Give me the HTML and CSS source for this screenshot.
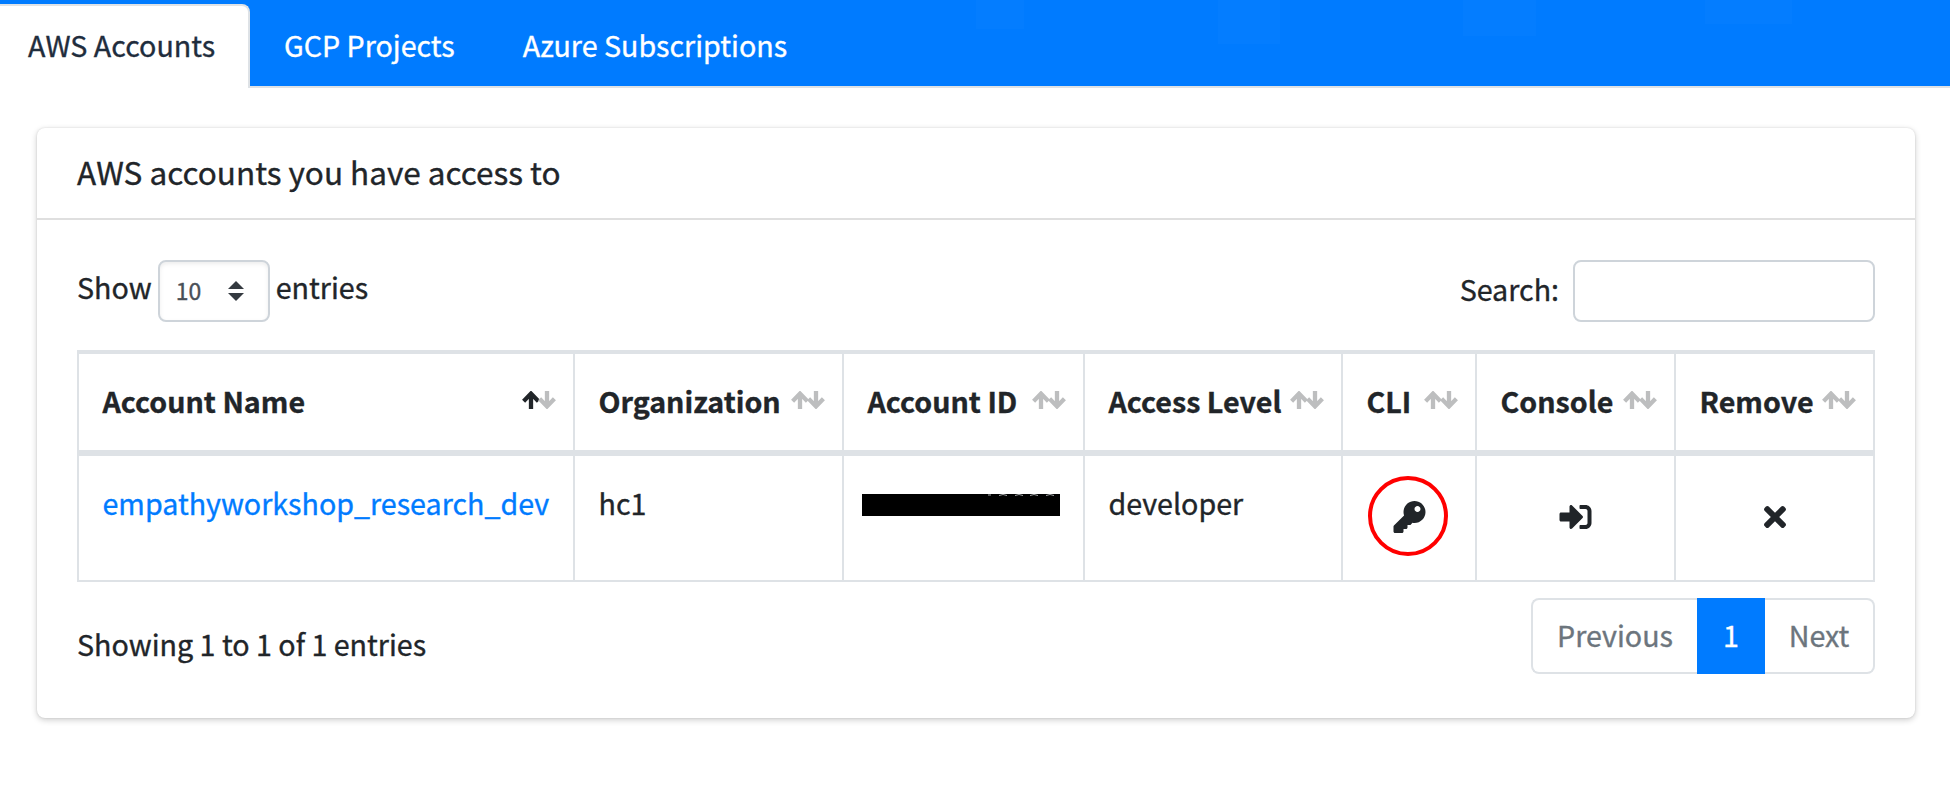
FILE: index.html
```html
<!DOCTYPE html>
<html lang="en">
<head>
<meta charset="utf-8">
<title>AWS Accounts</title>
<link rel="stylesheet" href="styles.css">
</head>
<body>
<svg class="defs" width="0" height="0" aria-hidden="true">
  <symbol id="sort-up" viewBox="0 0 18 18"><path d="M9 18V3M1.600 10.200L9 2.600l7.400 7.600" fill="none" stroke="currentColor" stroke-width="4.300"/></symbol>
  <symbol id="sort-down" viewBox="0 0 18 18"><path d="M9 0v15M1.600 7.800L9 15.400l7.400-7.600" fill="none" stroke="currentColor" stroke-width="4.300"/></symbol>
</svg>
<nav class="tabs">
  <a class="tab tab-active">AWS Accounts</a>
  <a class="tab">GCP Projects</a>
  <a class="tab">Azure Subscriptions</a>
</nav>
<main class="card">
  <header class="card-header"><h3 class="card-title">AWS accounts you have access to</h3></header>
  <div class="card-body">
    <div class="controls">
      <label class="length">Show
        <span class="select">10
          <svg class="caret" viewBox="0 0 16 20"><path d="M8 0l8 8H0zM0 12h16l-8 8z" fill="#343a40"/></svg>
        </span>
        entries</label>
      <label class="search">Search:<input class="search-input" type="text"></label>
    </div>
    <div class="table">
      <div class="row head">
        <div class="cell th">Account Name<span class="sort"><svg class="arrow on"><use href="#sort-up"/></svg><svg class="arrow"><use href="#sort-down"/></svg></span></div>
        <div class="cell th">Organization<span class="sort"><svg class="arrow"><use href="#sort-up"/></svg><svg class="arrow"><use href="#sort-down"/></svg></span></div>
        <div class="cell th">Account ID<span class="sort"><svg class="arrow"><use href="#sort-up"/></svg><svg class="arrow"><use href="#sort-down"/></svg></span></div>
        <div class="cell th">Access Level<span class="sort"><svg class="arrow"><use href="#sort-up"/></svg><svg class="arrow"><use href="#sort-down"/></svg></span></div>
        <div class="cell th">CLI<span class="sort"><svg class="arrow"><use href="#sort-up"/></svg><svg class="arrow"><use href="#sort-down"/></svg></span></div>
        <div class="cell th">Console<span class="sort"><svg class="arrow"><use href="#sort-up"/></svg><svg class="arrow"><use href="#sort-down"/></svg></span></div>
        <div class="cell th">Remove<span class="sort"><svg class="arrow"><use href="#sort-up"/></svg><svg class="arrow"><use href="#sort-down"/></svg></span></div>
      </div>
      <div class="row">
        <div class="cell"><a class="link">empathyworkshop_research_dev</a></div>
        <div class="cell">hc1</div>
        <div class="cell redacted-cell"><svg class="redacted" viewBox="0 0 198 22"><path d="M0 0h198v22H0z"/><path d="M126 1h3M137 1.500q4-2 8 0M153 1.500q4-2 8 0M168 1.500q4-2 8 0M184 1.500q4-2 8 0" fill="none" stroke="#a5a8aa"/></svg></div>
        <div class="cell">developer</div>
        <div class="cell action"><span class="ring"></span><svg class="icon" viewBox="0 0 512 512"><path fill="currentColor" d="M512 176.001C512 273.203 433.202 352 336 352c-11.220 0-22.190-1.062-32.827-3.069l-24.012 27.014A23.999 23.999 0 0 1 261.223 384H224v40c0 13.255-10.745 24-24 24h-40v40c0 13.255-10.745 24-24 24H24c-13.255 0-24-10.745-24-24v-78.059c0-6.365 2.529-12.470 7.029-16.971l161.802-161.802C163.108 213.814 160 195.271 160 176 160 78.798 238.797.001 335.999 0 433.488-.001 512 78.511 512 176.001zM336 128c0 26.510 21.490 48 48 48s48-21.490 48-48-21.490-48-48-48-48 21.490-48 48z"/></svg></div>
        <div class="cell action"><svg class="icon" viewBox="0 0 512 512"><path fill="currentColor" d="M416 448h-84c-6.600 0-12-5.400-12-12v-40c0-6.600 5.400-12 12-12h84c17.700 0 32-14.300 32-32V160c0-17.700-14.300-32-32-32h-84c-6.600 0-12-5.400-12-12V76c0-6.600 5.400-12 12-12h84c53 0 96 43 96 96v192c0 53-43 96-96 96zm-47-209L201 71c-15-15-41-4.500-41 17v96H24c-13.300 0-24 10.700-24 24v96c0 13.300 10.700 24 24 24h136v96c0 21.500 26 32 41 17l168-168c9.300-9.400 9.300-24.600 0-34z"/></svg></div>
        <div class="cell action"><svg class="icon icon-x" viewBox="0 0 352 512"><path fill="currentColor" d="M242.720 256l100.070-100.070c12.280-12.280 12.280-32.190 0-44.480l-22.240-22.240c-12.280-12.280-32.190-12.280-44.480 0L176 189.280 75.930 89.210c-12.280-12.280-32.190-12.280-44.480 0L9.210 111.450c-12.280 12.280-12.280 32.190 0 44.480L109.280 256 9.210 356.070c-12.280 12.280-12.280 32.190 0 44.480l22.240 22.240c12.280 12.280 32.200 12.280 44.480 0L176 322.720l100.070 100.070c12.280 12.280 32.200 12.280 44.480 0l22.240-22.240c12.280-12.280 12.280-32.190 0-44.480L242.720 256z"/></svg></div>
      </div>
    </div>
    <div class="footer">
      <div class="info">Showing 1 to 1 of 1 entries</div>
      <div class="pages"><span class="page prev">Previous</span><span class="page current">1</span><span class="page next">Next</span></div>
    </div>
  </div>
</main>
</body>
</html>
```

FILE: styles.css
```css
* { box-sizing: border-box; }
body {
  display: flow-root;
  min-height: 786px;
  margin: 0;
  background: #fff;
  color: #212529;
  font-family: "Noto Sans CJK SC", "Noto Sans CJK JP", sans-serif;
  font-size: 28.65px;
  line-height: 48px;
  -webkit-text-stroke: 0.35px currentColor;
}
.defs { display: block; position: absolute; }
.tabs {
  display: flex;
  height: 88px;
  padding-top: 4px;
  border-bottom: 2px solid #dee2e6;
  background-color: #007bff;
  background-image:
    linear-gradient(#047dff, #047dff), linear-gradient(#047dff, #047dff),
    linear-gradient(#047dff, #047dff), linear-gradient(#047dff, #047dff);
  background-repeat: no-repeat;
  background-position: 976px 0, 1218px 0, 1463px 0, 1705px 0;
  background-size: 48px 29px, 62px 44px, 73px 36px, 87px 24px;
}
.tab {
  height: 84px;
  padding: 17px 34px 0;
  color: #fff;
}
.tab-active {
  width: 250px;
  padding: 15px 0 0 28px;
  border: 2px solid #dee2e6;
  border-width: 2px 2px 0 0;
  border-radius: 0 8px 0 0;
  background: #fff;
  color: #1f2d3d;
}
.card {
  margin: 40px 35px 0 37px;
  height: 590px;
  border-radius: 8px;
  background: #fff;
  box-shadow: 0 0 2px rgba(0,0,0,.125), 0 2px 6px rgba(0,0,0,.2);
}
.card-header {
  height: 92px;
  padding: 19px 40px 0;
  border-bottom: 2px solid #dfdfdf;
}
.card-title { margin: 0; font-size: 31.5px; font-weight: 400; }
.card-body { padding: 40px; }
.controls {
  display: flex;
  justify-content: space-between;
  height: 90px;
}
.length { display: flex; height: 54px; align-items: center; }
.select {
  display: flex;
  justify-content: space-between;
  align-items: center;
  width: 112px;
  height: 62px;
  margin: 8px 6px 0 6px;
  padding: 0 24px 0 16px;
  border: 2px solid #ced4da;
  border-radius: 8px;
  box-shadow: inset 0 2px 4px rgba(0,0,0,.075);
  color: #495057;
  font-size: 23px;
  line-height: 44px;
  padding-bottom: 2px;
}
.caret { width: 16px; height: 20px; margin-top: 2px; }
.search { display: flex; height: 62px; padding-bottom: 4px; align-items: center; }
.search-input {
  width: 302px;
  height: 62px;
  margin: 4px 0 0 14px;
  border: 2px solid #ced4da;
  border-radius: 8px;
  background: #fff;
}
.table {
  border-top: 4px solid #dee2e6;
  border-left: 2px solid #dee2e6;
}
.row {
  display: grid;
  grid-template-columns: 496px 269px 241px 258px 134px 199px 199px;
  height: 126px;
  border-bottom: 2px solid #dee2e6;
}
.head { height: 102px; border-bottom-width: 6px; font-weight: 700; }
.cell {
  padding: 23px 0 0 23.5px;
  border-right: 2px solid #dee2e6;
  white-space: nowrap;
}
.th { display: flex; justify-content: space-between; padding-right: 17px; }
.sort { display: flex; height: 18px; margin-top: 14px; color: #bdbebf; }
.arrow { width: 18px; height: 18px; }
.arrow + .arrow { margin-left: -2px; }
.on { color: #212529; }
.link { color: #007bff; }
.redacted-cell { padding: 38px 0 0 18px; }
.redacted { display: block; width: 198px; height: 22px; }
.action {
  position: relative;
  display: flex;
  justify-content: center;
  padding: 45px 0 0;
}
.icon { width: 33px; height: 32px; }
.icon-x { width: 22px; }
.ring {
  position: absolute;
  left: 25px;
  top: 20px;
  width: 80px;
  height: 80px;
  border: 4px solid #f00;
  border-radius: 50%;
}
.footer { display: flex; justify-content: space-between; padding-top: 16px; }
.info { padding-top: 22px; }
.pages { display: flex; height: 76px; color: #6c757d; }
.page { padding-top: 11px; border: 2px solid #dee2e6; text-align: center; }
.prev { width: 166px; border-right: 0; border-radius: 8px 0 0 8px; }
.current { width: 68px; border-color: #007bff; background: #007bff; color: #fff; }
.next { width: 110px; border-left: 0; border-radius: 0 8px 8px 0; }
```
